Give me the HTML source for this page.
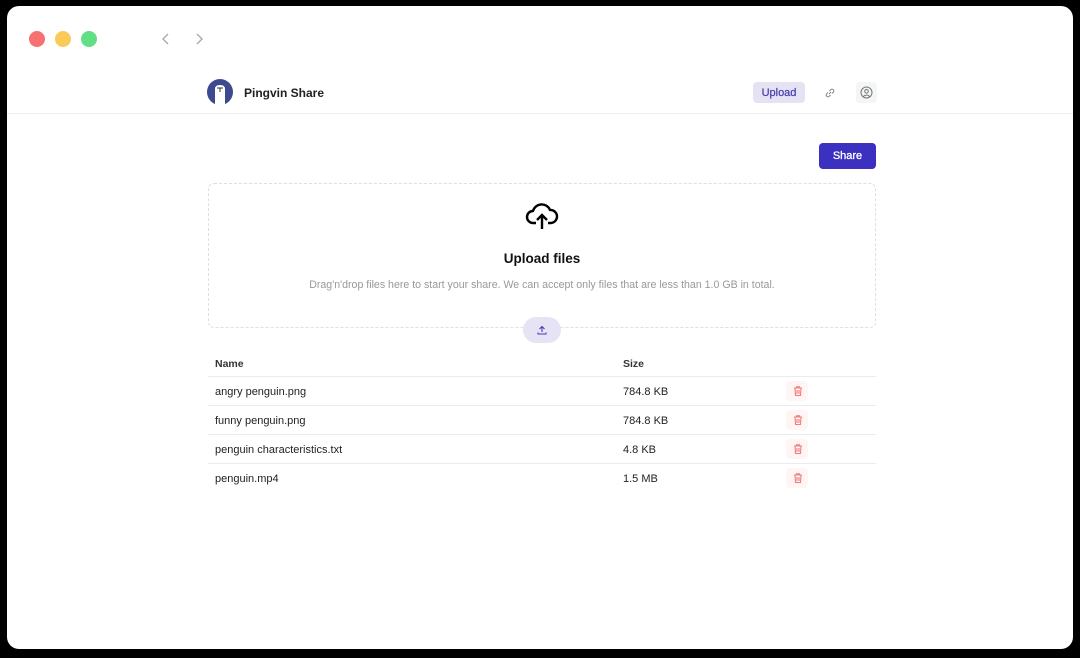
<!DOCTYPE html>
<html><head><style>
*{margin:0;padding:0;box-sizing:border-box}
body{width:1080px;height:658px;background:#000;font-family:"Liberation Sans",sans-serif;position:relative;overflow:hidden;color:#000}
.win{position:absolute;left:7px;top:6px;width:1066px;height:643px;background:#fff;border-radius:12px;overflow:hidden}
.dot{position:absolute;top:25px;width:16px;height:16px;border-radius:50%}
.abs{position:absolute}
.row{position:absolute;left:201px;width:668px;height:29px;border-top:1px solid #e9ecef;font-size:11px;color:#222}
.row span{position:absolute;top:9px}
.del{position:absolute;left:578px;top:4px;width:22px;height:20px;border-radius:4px;background:#fff5f5}
</style></head><body>
<div class="win">
<div class="dot" style="left:22px;background:#f87171"></div>
<div class="dot" style="left:48px;background:#fbcb5a"></div>
<div class="dot" style="left:74px;background:#62de84"></div>
<svg class="abs" style="left:153px;top:26px" width="12" height="14" viewBox="0 0 12 14"><path d="M8 2 L3 7 L8 12" fill="none" stroke="#aaa" stroke-width="1.4"/></svg>
<svg class="abs" style="left:186px;top:26px" width="12" height="14" viewBox="0 0 12 14"><path d="M4 2 L9 7 L4 12" fill="none" stroke="#aaa" stroke-width="1.4"/></svg>
<svg class="abs" style="left:200px;top:73px" width="26" height="26" viewBox="0 0 26 26"><circle cx="13" cy="13" r="13" fill="#3d4a8f"/><path d="M8 26 V10 Q8 6 13 6 Q18 6 18 10 V26Z" fill="#fff"/><path d="M10 9 H16 M13 9 V13" stroke="#333" stroke-width="1"/></svg>
<div class="abs" style="left:237px;top:80px;font-size:12px;font-weight:bold;color:#222">Pingvin Share</div>
<div class="abs" style="left:746px;top:76px;width:52px;height:21px;border-radius:4px;background:#e5e3f3;color:#4a3fb0;font-size:11px;text-align:center;line-height:22px;-webkit-text-stroke:0.25px #4a3fb0">Upload</div>
<svg class="abs" style="left:816px;top:80px" width="14" height="14" viewBox="0 0 14 14"><path d="M6 8 L8 6 M5 6.5 L3.5 8 A1.8 1.8 0 0 0 6 10.5 L7.5 9 M6.5 5 L8 3.5 A1.8 1.8 0 0 1 10.5 6 L9 7.5" fill="none" stroke="#888" stroke-width="1"/></svg>
<div class="abs" style="left:849px;top:76px;width:21px;height:21px;border-radius:4px;background:#f4f5f6"></div>
<svg class="abs" style="left:852px;top:79px" width="15" height="15" viewBox="0 0 15 15"><circle cx="7.5" cy="7.5" r="5.5" fill="none" stroke="#777" stroke-width="1"/><circle cx="7.5" cy="6.3" r="1.8" fill="none" stroke="#777" stroke-width="1"/><path d="M4.3 11.5 Q7.5 8.5 10.7 11.5" fill="none" stroke="#777" stroke-width="1"/></svg>
<div class="abs" style="left:0;top:107px;width:1066px;height:1px;background:#eceef0"></div>
<div class="abs" style="left:812px;top:137px;width:57px;height:26px;border-radius:4px;background:#3b30c0;color:#fff;font-size:11px;text-align:center;line-height:27px;-webkit-text-stroke:0.3px #fff">Share</div>
<div class="abs" style="left:201px;top:177px;width:668px;height:145px;border:1px dashed #dcdfe3;border-radius:6px"></div>
<svg class="abs" style="left:518px;top:195px" width="34" height="30" viewBox="0 0 34 30"><path d="M11 22 H8 A6 6 0 0 1 8 10 A9 9 0 0 1 25 9 A6.5 6.5 0 0 1 26 22 H23" fill="none" stroke="#000" stroke-width="2.4" stroke-linejoin="round"/><path d="M17 28 V14 M12 19 L17 14 L22 19" fill="none" stroke="#000" stroke-width="2.4"/></svg>
<div class="abs" style="left:201px;top:245px;width:668px;text-align:center;font-size:13.5px;font-weight:bold;color:#111">Upload files</div>
<div class="abs" style="left:201px;top:273px;width:668px;text-align:center;font-size:10.6px;color:#999">Drag'n'drop files here to start your share. We can accept only files that are less than 1.0 GB in total.</div>
<div class="abs" style="left:516px;top:311px;width:38px;height:26px;border-radius:13px;background:#e6e4f4"></div>
<svg class="abs" style="left:529px;top:318px" width="12" height="12" viewBox="0 0 12 12"><path d="M6 8 V2.5 M3.5 5 L6 2.5 L8.5 5 M2 8.5 V10 H10 V8.5" fill="none" stroke="#4a3fb0" stroke-width="1.1"/></svg>
<div class="abs" style="left:208px;top:352px;font-size:10.5px;font-weight:bold;color:#333">Name</div>
<div class="abs" style="left:616px;top:352px;font-size:10.5px;font-weight:bold;color:#333">Size</div>
<div class="row" style="top:370px"><span style="left:7px">angry penguin.png</span><span style="left:415px">784.8 KB</span><div class="del"></div></div>
<div class="row" style="top:399px"><span style="left:7px">funny penguin.png</span><span style="left:415px">784.8 KB</span><div class="del"></div></div>
<div class="row" style="top:428px"><span style="left:7px">penguin characteristics.txt</span><span style="left:415px">4.8 KB</span><div class="del"></div></div>
<div class="row" style="top:457px;border-bottom:none"><span style="left:7px">penguin.mp4</span><span style="left:415px">1.5 MB</span><div class="del"></div></div>
<svg class="abs" style="left:785px;top:379px" width="12" height="12" viewBox="0 0 12 12"><path d="M2 3 H10 M4.5 3 V1.8 H7.5 V3 M3 3 L3.5 10.5 H8.5 L9 3 M5 5 V9 M7 5 V9" fill="none" stroke="#f27a7a" stroke-width="1.1"/></svg>
<svg class="abs" style="left:785px;top:408px" width="12" height="12" viewBox="0 0 12 12"><path d="M2 3 H10 M4.5 3 V1.8 H7.5 V3 M3 3 L3.5 10.5 H8.5 L9 3 M5 5 V9 M7 5 V9" fill="none" stroke="#f27a7a" stroke-width="1.1"/></svg>
<svg class="abs" style="left:785px;top:437px" width="12" height="12" viewBox="0 0 12 12"><path d="M2 3 H10 M4.5 3 V1.8 H7.5 V3 M3 3 L3.5 10.5 H8.5 L9 3 M5 5 V9 M7 5 V9" fill="none" stroke="#f27a7a" stroke-width="1.1"/></svg>
<svg class="abs" style="left:785px;top:466px" width="12" height="12" viewBox="0 0 12 12"><path d="M2 3 H10 M4.5 3 V1.8 H7.5 V3 M3 3 L3.5 10.5 H8.5 L9 3 M5 5 V9 M7 5 V9" fill="none" stroke="#f27a7a" stroke-width="1.1"/></svg>
</div>
</body></html>
